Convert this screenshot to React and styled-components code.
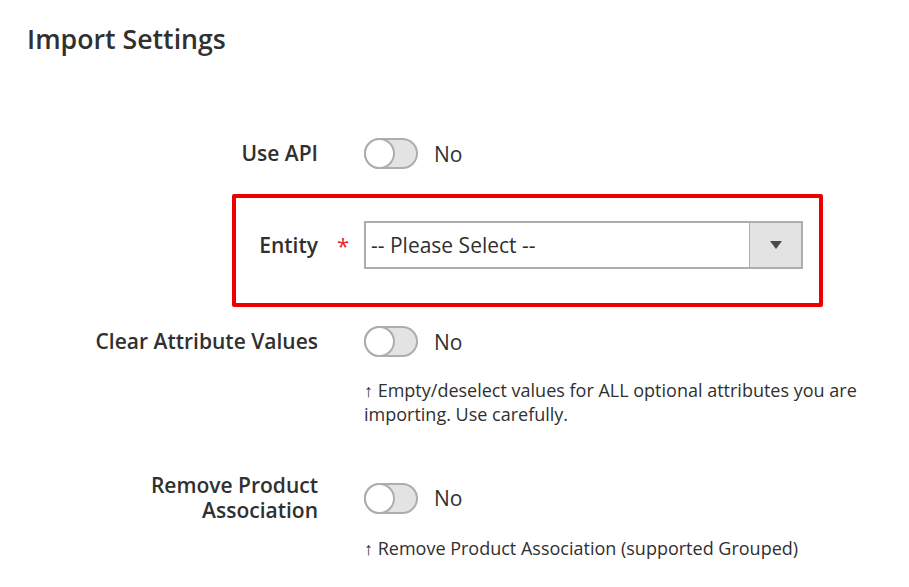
import React from 'react';
import styled, { createGlobalStyle } from 'styled-components';

const GlobalStyle = createGlobalStyle`
  body {
    margin: 0;
    background: #fff;
    font-family: "Open Sans", "Noto Sans", sans-serif;
    color: #303030;
  }
`;

const Page = styled.div`
  width: 909px;
  height: 587px;
  overflow: hidden;
  padding: 20px 0 0 27px;
  box-sizing: border-box;
`;

const Title = styled.h2`
  margin: 0 0 80px;
  font-size: 26.7px;
  font-weight: 600;
  line-height: 38px;
  color: #303030;
`;

const Field = styled.div`
  position: relative;
  display: grid;
  grid-template-columns: 291px 46px 495px;
  align-items: center;
  margin-bottom: ${p => p.$gap || 0}px;
`;

const Label = styled.label`
  grid-column: 1;
  grid-row: 1;
  text-align: right;
  font-size: 21px;
  font-weight: 600;
  line-height: 25px;
  color: #303030;
`;

const Required = styled.span`
  grid-column: 2;
  grid-row: 1;
  color: #e22626;
  font-size: 22px;
  text-align: center;
  padding-left: 4px;
`;

const Control = styled.div`
  grid-column: 3;
  grid-row: 1;
  display: flex;
  align-items: center;
`;

const SwitchRow = styled.div`
  display: flex;
  align-items: center;
  gap: 16px;
  font-size: 21px;
  color: #303030;
`;

const Track = styled.span`
  position: relative;
  width: 54px;
  height: 31px;
  box-sizing: border-box;
  border-radius: 16px;
  border: 2px solid #adadad;
  background: #e3e3e3;
`;

const Knob = styled.span`
  position: absolute;
  left: -2px;
  top: -2px;
  width: 31px;
  height: 31px;
  box-sizing: border-box;
  border-radius: 50%;
  border: 2px solid #adadad;
  background: #fff;
`;

const Select = styled.div`
  display: flex;
  width: 439px;
  height: 48px;
  box-sizing: border-box;
  border: 2px solid #adadad;
  background: #fff;
`;

const SelectValue = styled.span`
  flex: 1;
  display: flex;
  align-items: center;
  padding-left: 5px;
  font-size: 21px;
  color: #303030;
`;

const SelectArrow = styled.span`
  width: 51px;
  display: flex;
  align-items: center;
  justify-content: center;
  background: #e3e3e3;
  border-left: 1px solid #adadad;

  &::after {
    content: '';
    border-left: 6px solid transparent;
    border-right: 6px solid transparent;
    border-top: 8px solid #514943;
  }
`;

const Note = styled.div`
  grid-column: 3;
  grid-row: 2;
  margin-top: ${p => p.$top}px;
  font-size: 18px;
  line-height: 24px;
  color: #303030;
`;

const Highlight = styled.div`
  position: absolute;
  left: 205px;
  top: -27px;
  width: 591px;
  height: 113px;
  box-sizing: border-box;
  border: 4px solid #ee0000;
  border-radius: 2px;
  pointer-events: none;
`;

const Toggle = ({ label }) => (
  <SwitchRow>
    <Track><Knob /></Track>
    <span>{label}</span>
  </SwitchRow>
);

export default function App() {
  return (
    <>
      <GlobalStyle />
      <Page>
        <Title>Import Settings</Title>

        <Field $gap={52}>
          <Label>Use API</Label>
          <Control><Toggle label="No" /></Control>
        </Field>

        <Field $gap={57}>
          <Highlight />
          <Label>Entity</Label>
          <Required>*</Required>
          <Control>
            <Select>
              <SelectValue>-- Please Select --</SelectValue>
              <SelectArrow />
            </Select>
          </Control>
        </Field>

        <Field $gap={47}>
          <Label>Clear Attribute Values</Label>
          <Control><Toggle label="No" /></Control>
          <Note $top={21}>↑ Empty/deselect values for ALL optional attributes you are importing. Use carefully.</Note>
        </Field>

        <Field>
          <Label>Remove Product<br />Association</Label>
          <Control><Toggle label="No" /></Control>
          <Note $top={13}>↑ Remove Product Association (supported Grouped)</Note>
        </Field>
      </Page>
    </>
  );
}
